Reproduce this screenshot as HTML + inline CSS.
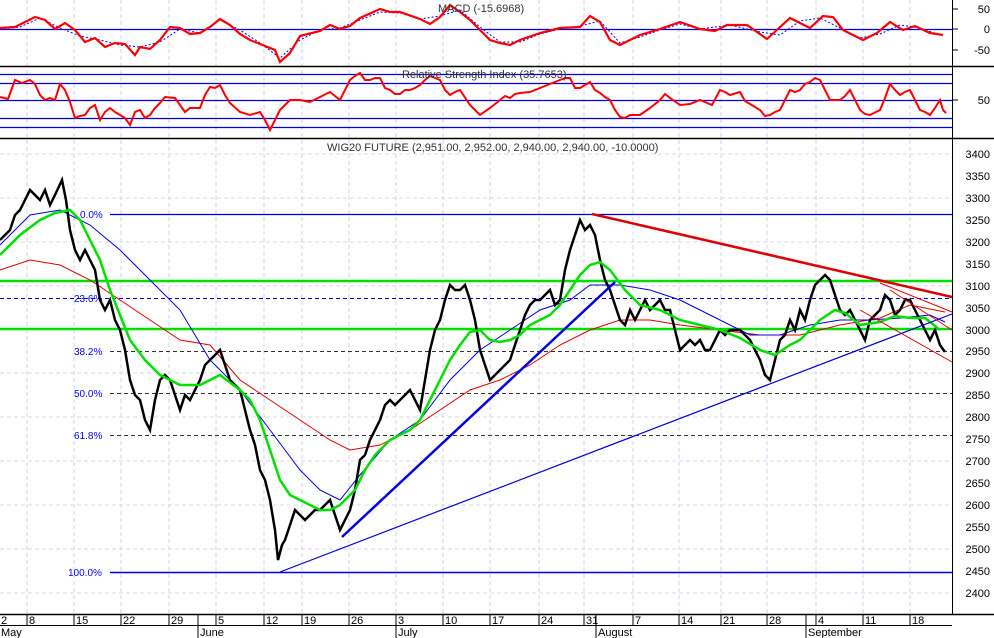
<!DOCTYPE html>
<html><head><meta charset="utf-8"><style>
html,body{margin:0;padding:0;background:#fff;width:994px;height:638px;overflow:hidden}
svg{display:block}
text{font-family:"Liberation Sans",sans-serif;font-size:11px}
</style></head><body>
<svg width="994" height="638" viewBox="0 0 994 638" xmlns="http://www.w3.org/2000/svg">
<rect width="994" height="638" fill="#fff"/>
<!-- vertical grid -->
<g stroke="#d0d0f0" stroke-dasharray="4,3" stroke-width="1">
<line x1="27" y1="0" x2="27" y2="614"/><line x1="74" y1="0" x2="74" y2="614"/><line x1="121" y1="0" x2="121" y2="614"/><line x1="169" y1="0" x2="169" y2="614"/><line x1="216" y1="0" x2="216" y2="614"/><line x1="264" y1="0" x2="264" y2="614"/><line x1="302" y1="0" x2="302" y2="614"/><line x1="349" y1="0" x2="349" y2="614"/><line x1="396" y1="0" x2="396" y2="614"/><line x1="443" y1="0" x2="443" y2="614"/><line x1="490" y1="0" x2="490" y2="614"/><line x1="539" y1="0" x2="539" y2="614"/><line x1="584" y1="0" x2="584" y2="614"/><line x1="633" y1="0" x2="633" y2="614"/><line x1="679" y1="0" x2="679" y2="614"/><line x1="721" y1="0" x2="721" y2="614"/><line x1="767" y1="0" x2="767" y2="614"/><line x1="816" y1="0" x2="816" y2="614"/><line x1="863" y1="0" x2="863" y2="614"/><line x1="910" y1="0" x2="910" y2="614"/>
</g>
<g stroke="#d8d8f0" stroke-dasharray="4,3">
<line x1="0" y1="154" x2="952" y2="154"/><line x1="0" y1="198" x2="952" y2="198"/><line x1="0" y1="242" x2="952" y2="242"/><line x1="0" y1="286" x2="952" y2="286"/><line x1="0" y1="373" x2="952" y2="373"/><line x1="0" y1="417" x2="952" y2="417"/><line x1="0" y1="461" x2="952" y2="461"/><line x1="0" y1="505" x2="952" y2="505"/><line x1="0" y1="549" x2="952" y2="549"/><line x1="0" y1="593" x2="952" y2="593"/>
</g>
<!-- panel separators -->
<g stroke="#000" stroke-width="1.5">
<line x1="0" y1="66.5" x2="994" y2="66.5"/><line x1="0" y1="138.5" x2="994" y2="138.5"/><line x1="0" y1="614.5" x2="994" y2="614.5"/>
</g>
<line x1="952.5" y1="0" x2="952.5" y2="614" stroke="#000"/>
<!-- MACD -->
<line x1="0" y1="29.5" x2="952" y2="29.5" stroke="#0000e0" stroke-width="1.2"/>
<polyline fill="none" stroke="#00f" stroke-width="1" stroke-dasharray="2,2" points="0,29 20,27 40,18 60,28 80,36 100,40 120,45 140,47 160,42 180,29 200,33 220,20 240,30 260,43 280,58 300,40 320,30 340,28 360,20 380,12 400,13 420,19 440,16 460,10 480,27 500,42 520,42 540,34 560,29 580,26 600,21 620,43 640,37 660,30 680,24 700,29 730,25 760,32 780,35 800,21 820,18 840,28 860,38 880,34 900,25 920,28 940,35"/>
<polyline fill="none" stroke="#f00" stroke-width="2.2" points="0,28 15,27 35,17 45,20 55,29 65,23 75,30 85,42 95,38 105,47 115,43 125,44 135,55 140,47 150,49 160,40 170,27 180,28 190,34 200,33 210,27 220,19 230,25 240,34 250,40 260,44 275,50 280,62 290,53 300,36 320,31 330,25 340,29 350,26 360,18 380,9 390,12 400,12 420,19 430,24 440,17 450,5 460,12 470,20 480,30 490,40 500,43 510,45 520,40 540,33 560,28 580,27 590,16 600,22 610,40 620,45 640,35 660,29 680,22 700,29 715,31 727,25 747,25 767,39 790,18 810,28 823,16 833,17 843,30 863,40 877,33 890,22 903,30 915,26 930,33 943,35"/>
<text x="438" y="12" fill="#333">MACD (-15.6968)</text>
<!-- RSI -->
<g stroke="#0000e0" stroke-width="1.2">
<line x1="0" y1="74.5" x2="952" y2="74.5"/><line x1="0" y1="83.5" x2="952" y2="83.5"/><line x1="0" y1="100.5" x2="952" y2="100.5"/><line x1="0" y1="118.5" x2="952" y2="118.5"/><line x1="0" y1="127.5" x2="952" y2="127.5"/>
</g>
<polyline fill="none" stroke="#f00" stroke-width="2" points="0,97 8,99 15,80 22,83 30,80 35,84 40,95 45,100 50,98 55,100 60,84 65,90 70,102 75,118 80,116 85,115 90,108 95,105 100,120 105,112 110,108 115,112 120,115 125,118 130,125 135,112 140,110 145,118 150,115 155,108 160,103 165,97 175,98 180,105 185,112 190,108 200,108 205,95 210,87 215,88 220,85 225,95 230,103 240,112 250,115 260,112 265,120 270,130 275,120 280,110 285,105 290,100 300,100 310,102 320,97 330,92 340,100 345,90 350,80 355,76 360,73 365,80 370,80 375,78 380,78 385,88 390,90 395,94 400,94 405,90 410,90 415,88 420,85 425,80 430,76 435,78 440,80 445,90 450,95 455,92 460,90 470,105 480,115 490,108 500,100 505,96 510,98 515,94 520,93 530,92 540,88 550,84 560,80 565,78 570,78 575,88 580,88 585,85 590,82 595,90 600,93 605,97 610,100 615,110 620,117 625,118 630,115 640,115 650,108 660,100 665,94 670,98 680,105 690,104 700,100 712,105 720,90 725,92 730,95 740,92 745,101 750,104 760,110 765,116 770,115 775,112 780,110 785,100 790,90 795,92 800,90 805,84 810,82 815,78 820,80 825,90 830,100 840,100 845,96 850,90 855,100 860,110 865,114 870,115 880,110 885,98 890,84 895,90 900,95 905,92 910,90 915,100 920,110 925,112 930,115 935,108 940,100 943,110 946,113"/>
<text x="402" y="78" fill="#333">Relative Strength Index (35.7653)</text>
<!-- main label -->
<text x="327" y="151" fill="#333">WIG20 FUTURE (2,951.00, 2,952.00, 2,940.00, 2,940.00, -10.0000)</text>
<!-- fib lines -->
<g stroke="#0000e0">
<line x1="110" y1="214.5" x2="952" y2="214.5" stroke-width="1.2"/>
<line x1="110" y1="572.5" x2="952" y2="572.5" stroke-width="1.5"/>
</g>
<g stroke="#000080" stroke-dasharray="4,3">
<line x1="0" y1="298.5" x2="952" y2="298.5" stroke="#0000e0"/>
<line x1="110" y1="351.5" x2="952" y2="351.5" stroke="#333"/>
<line x1="110" y1="393.5" x2="952" y2="393.5" stroke="#333"/>
<line x1="110" y1="435.5" x2="952" y2="435.5" stroke="#333"/>
</g>
<g fill="#00f" font-size="10">
<text x="80" y="218" style="font-size:10px">0.0%</text>
<text x="74" y="302" style="font-size:10px">23.6%</text>
<text x="74" y="355" style="font-size:10px">38.2%</text>
<text x="74" y="397" style="font-size:10px">50.0%</text>
<text x="74" y="439" style="font-size:10px">61.8%</text>
<text x="68" y="576" style="font-size:10px">100.0%</text>
</g>
<!-- green horizontals -->
<line x1="0" y1="281" x2="952" y2="281" stroke="#00e000" stroke-width="2.5"/>
<line x1="0" y1="329" x2="952" y2="329" stroke="#00e000" stroke-width="2.5"/>
<!-- MAs -->
<polyline fill="none" stroke="#e00000" stroke-width="1" points="0,270 30,260 60,265 90,280 120,300 150,320 180,340 210,345 240,380 270,400 300,420 330,440 350,450 380,445 410,430 440,410 470,390 500,380 530,365 560,345 590,330 620,320 650,320 680,325 720,330 760,335 800,335 840,325 880,318 910,305 945,312"/>
<polyline fill="none" stroke="#0000e0" stroke-width="1" points="0,245 30,215 60,210 90,225 120,250 150,280 180,310 210,360 240,390 270,430 300,470 320,490 340,500 360,475 390,440 420,420 450,380 480,350 510,330 540,310 570,300 590,285 620,285 650,290 680,300 700,310 720,320 750,335 780,335 810,325 840,320 870,320 900,318 930,315 945,322"/>
<!-- price -->
<polyline fill="none" stroke="#000" stroke-width="2.5" points="0,240 5,235 10,230 15,215 20,210 25,200 30,190 35,195 40,200 45,190 50,205 55,195 62,180 66,200 70,230 75,250 80,260 85,250 90,260 95,270 100,300 105,310 110,300 115,320 120,330 125,350 130,380 135,395 140,400 145,420 150,430 155,400 160,380 165,375 170,380 175,395 180,410 185,395 190,400 195,390 200,380 205,365 210,360 215,355 220,350 225,365 230,380 235,385 240,390 245,410 250,430 255,445 260,470 265,480 270,500 275,530 278,560 282,545 285,540 290,525 295,510 300,515 305,520 310,515 315,510 320,510 325,505 330,500 335,515 340,530 345,520 350,510 355,490 360,460 365,455 370,440 375,430 380,420 385,405 390,400 395,405 400,400 405,395 410,390 415,400 420,410 425,380 430,350 435,330 440,320 445,300 450,285 455,290 460,290 465,285 470,300 475,320 480,350 485,365 490,380 495,375 500,370 505,365 510,360 515,345 520,330 525,315 530,305 535,300 540,300 545,295 550,290 555,305 560,300 565,270 570,250 575,235 580,220 585,230 590,225 595,235 600,260 605,280 610,290 615,305 620,320 625,325 630,310 635,320 640,310 645,300 650,310 655,305 660,300 665,310 670,310 675,330 680,350 685,345 690,340 695,345 700,340 705,350 710,350 715,340 720,330 725,335 730,330 735,330 740,330 745,335 750,340 755,350 760,360 765,375 770,380 775,360 780,340 785,335 790,320 795,330 800,310 805,320 810,300 815,285 820,280 825,275 830,280 835,295 840,310 845,315 850,310 855,320 860,330 865,340 870,320 875,315 880,310 885,295 890,300 895,315 900,310 905,300 910,300 915,310 920,320 925,330 930,340 935,330 940,345 945,352"/>
<polyline fill="none" stroke="#00e000" stroke-width="2.5" points="0,255 20,235 40,220 55,213 70,210 80,220 90,240 100,260 110,290 120,315 130,340 145,360 160,375 180,385 200,385 210,380 220,375 240,390 250,400 260,420 270,450 280,480 290,495 300,500 310,505 320,510 330,510 340,505 355,490 365,470 375,455 390,440 410,430 420,420 430,400 440,380 450,360 460,345 470,332 480,330 490,340 500,342 510,340 520,335 530,325 540,320 550,315 560,305 570,290 580,275 590,265 600,262 610,270 625,290 640,305 660,310 680,320 700,325 720,330 740,338 760,350 775,355 790,345 800,340 820,320 835,310 845,313 860,325 880,322 895,316 910,318 925,318 940,330"/>
<!-- trendlines -->
<line x1="342" y1="537" x2="615" y2="282" stroke="#0000e0" stroke-width="2.5"/>
<line x1="280" y1="572" x2="952" y2="314" stroke="#0000e0" stroke-width="1.2"/>
<line x1="592" y1="214" x2="952" y2="297" stroke="#e00000" stroke-width="2.5"/>
<line x1="880" y1="283" x2="952" y2="312" stroke="#e00000" stroke-width="1"/>
<line x1="860" y1="310" x2="952" y2="362" stroke="#e00000" stroke-width="1"/>
<line x1="890" y1="290" x2="952" y2="330" stroke="#e00000" stroke-width="1"/>
<!-- right axis -->
<g stroke="#000">
<line x1="952" y1="9" x2="958" y2="9"/><line x1="952" y1="29" x2="958" y2="29"/><line x1="952" y1="50" x2="958" y2="50"/>
<line x1="952" y1="100" x2="958" y2="100"/>
</g>
<g fill="#000" text-anchor="end">
<text x="990" y="13">50</text><text x="990" y="33">0</text><text x="990" y="54">-50</text><text x="990" y="104">50</text>
<text x="990" y="158">3400</text><text x="990" y="180">3350</text><text x="990" y="202">3300</text><text x="990" y="224">3250</text><text x="990" y="246">3200</text><text x="990" y="268">3150</text><text x="990" y="290">3100</text><text x="990" y="312">3050</text><text x="990" y="334">3000</text><text x="990" y="355">2950</text><text x="990" y="377">2900</text><text x="990" y="399">2850</text><text x="990" y="421">2800</text><text x="990" y="443">2750</text><text x="990" y="465">2700</text><text x="990" y="487">2650</text><text x="990" y="509">2600</text><text x="990" y="531">2550</text><text x="990" y="553">2500</text><text x="990" y="575">2450</text><text x="990" y="597">2400</text>
</g>
<!-- x axis -->
<g stroke="#000">
<line x1="0" y1="625.5" x2="952" y2="625.5"/>
<line x1="27" y1="614" x2="27" y2="625"/><line x1="74" y1="614" x2="74" y2="625"/><line x1="121" y1="614" x2="121" y2="625"/><line x1="169" y1="614" x2="169" y2="625"/><line x1="216" y1="614" x2="216" y2="625"/><line x1="264" y1="614" x2="264" y2="625"/><line x1="302" y1="614" x2="302" y2="625"/><line x1="349" y1="614" x2="349" y2="625"/><line x1="396" y1="614" x2="396" y2="625"/><line x1="443" y1="614" x2="443" y2="625"/><line x1="490" y1="614" x2="490" y2="625"/><line x1="539" y1="614" x2="539" y2="625"/><line x1="584" y1="614" x2="584" y2="625"/><line x1="633" y1="614" x2="633" y2="625"/><line x1="679" y1="614" x2="679" y2="625"/><line x1="721" y1="614" x2="721" y2="625"/><line x1="767" y1="614" x2="767" y2="625"/><line x1="816" y1="614" x2="816" y2="625"/><line x1="863" y1="614" x2="863" y2="625"/><line x1="910" y1="614" x2="910" y2="625"/>
<line x1="198" y1="614" x2="198" y2="638"/><line x1="396" y1="625" x2="396" y2="638"/><line x1="596" y1="614" x2="596" y2="638"/><line x1="806" y1="614" x2="806" y2="638"/>
</g>
<g fill="#000" style="font-size:10px">
<text x="1" y="624">2</text><text x="29" y="624">8</text><text x="76" y="624">15</text><text x="123" y="624">22</text><text x="171" y="624">29</text><text x="218" y="624">5</text><text x="266" y="624">12</text><text x="304" y="624">19</text><text x="351" y="624">26</text><text x="398" y="624">3</text><text x="445" y="624">10</text><text x="492" y="624">17</text><text x="541" y="624">24</text><text x="586" y="624">31</text><text x="635" y="624">7</text><text x="681" y="624">14</text><text x="723" y="624">21</text><text x="769" y="624">28</text><text x="818" y="624">4</text><text x="865" y="624">11</text><text x="912" y="624">18</text>
<text x="1" y="636">May</text><text x="200" y="636">June</text><text x="398" y="636">July</text><text x="598" y="636">August</text><text x="808" y="636">September</text>
</g>
</svg>
</body></html>
